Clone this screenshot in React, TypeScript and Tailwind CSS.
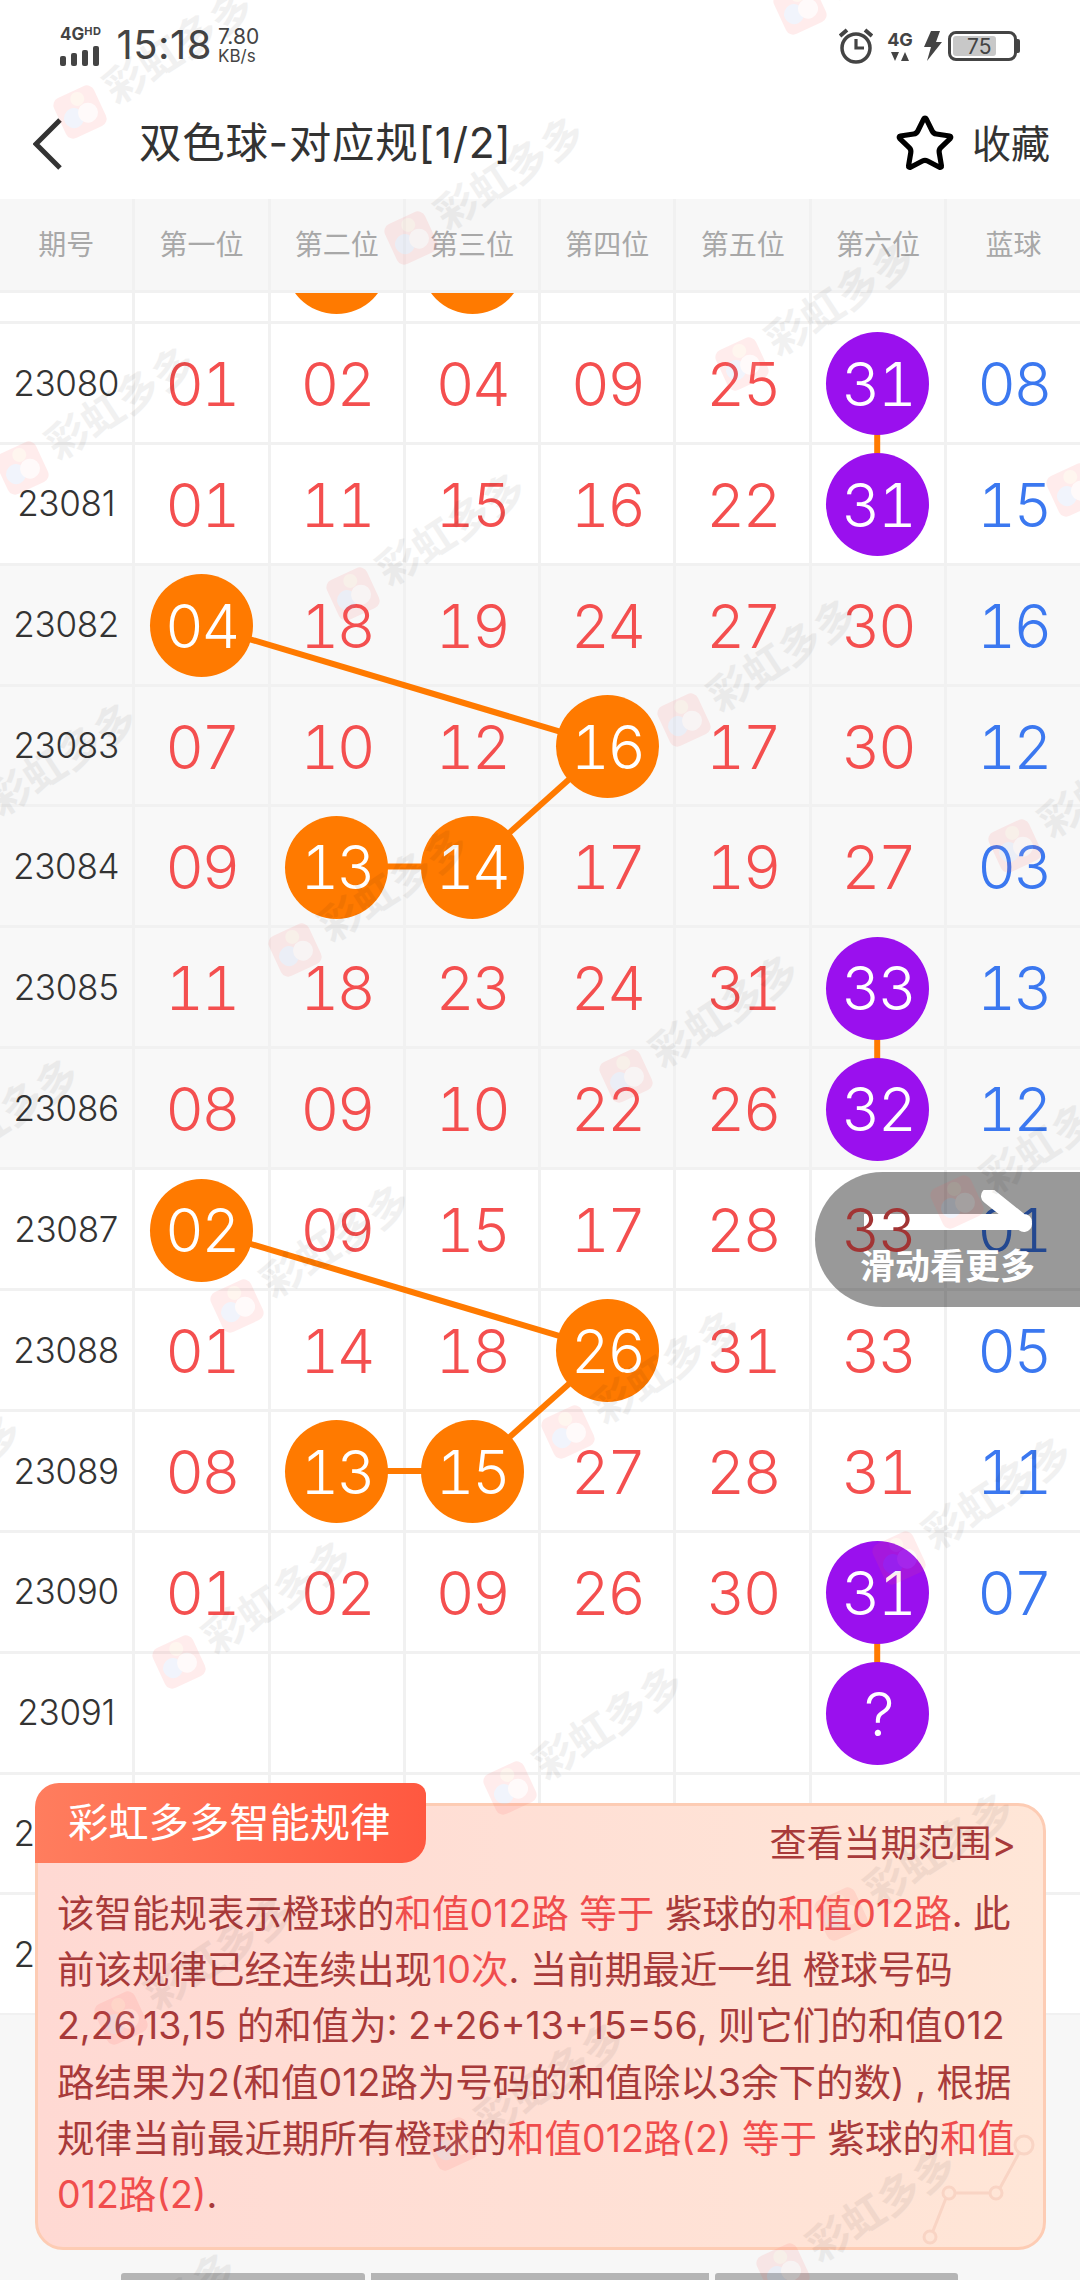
import { Star } from "lucide-react";

type Cell = string | { n: string; ball: "o" | "p" };

const o = (n: string): Cell => ({ n, ball: "o" });
const p = (n: string): Cell => ({ n, ball: "p" });

const rows: { id: string; cells: Cell[]; gray?: boolean }[] = [
  { id: "", cells: ["", o(""), o(""), "", "", "", ""] },
  { id: "23080", cells: ["01", "02", "04", "09", "25", p("31"), "08"] },
  { id: "23081", cells: ["01", "11", "15", "16", "22", p("31"), "15"] },
  { id: "23082", gray: true, cells: [o("04"), "18", "19", "24", "27", "30", "16"] },
  { id: "23083", gray: true, cells: ["07", "10", "12", o("16"), "17", "30", "12"] },
  { id: "23084", gray: true, cells: ["09", o("13"), o("14"), "17", "19", "27", "03"] },
  { id: "23085", gray: true, cells: ["11", "18", "23", "24", "31", p("33"), "13"] },
  { id: "23086", gray: true, cells: ["08", "09", "10", "22", "26", p("32"), "12"] },
  { id: "23087", cells: [o("02"), "09", "15", "17", "28", "33", "01"] },
  { id: "23088", cells: ["01", "14", "18", o("26"), "31", "33", "05"] },
  { id: "23089", cells: ["08", o("13"), o("15"), "27", "28", "31", "11"] },
  { id: "23090", cells: ["01", "02", "09", "26", "30", p("31"), "07"] },
  { id: "23091", cells: ["", "", "", "", "", p("?"), ""] },
  { id: "23092", cells: ["", "", "", "", "", "", ""] },
  { id: "23093", cells: ["", "", "", "", "", "", ""] },
];

// col, row index pairs joined by the orange line
const links: [number, number, number, number][] = [
  [2, 0, 3, 0],
  [6, 1, 6, 2],
  [1, 3, 4, 4],
  [4, 4, 3, 5],
  [3, 5, 2, 5],
  [6, 6, 6, 7],
  [1, 8, 4, 9],
  [4, 9, 3, 10],
  [3, 10, 2, 10],
  [6, 11, 6, 12],
];

const cx = (c: number) => 66 + c * 135.2;
const cy = (r: number) => -90 + r * 120.9 + 59;

const marks: { x: number; y: number }[] = [];
for (let i = -3; i < 6; i++) {
  for (let j = -1; j < 8; j++) {
    const x = 80 + 331 * i - 58 * j;
    const y = 112 + 126 * i + 356 * j;
    if (x > -220 && x < 1100 && y > -40 && y < 2400) marks.push({ x, y });
  }
}

const Watermark = ({ x, y }: { x: number; y: number }) => (
  <div className="absolute" style={{ left: x, top: y }}>
    <svg width="50" height="50" viewBox="0 0 50 50" className="absolute -left-[25px] -top-[25px] opacity-[0.11] -rotate-[25deg]">
      <rect x="3" y="3" width="44" height="44" rx="8" fill="#ff5a5a" />
      <circle cx="17" cy="28" r="10" fill="#8aa6e8" />
      <circle cx="32" cy="29" r="10" fill="#ffd9d9" />
      <circle cx="28" cy="12" r="7" fill="#ffb27a" />
    </svg>
    <span className="absolute left-[28px] -top-[44px] origin-left -rotate-[33deg] whitespace-nowrap text-[42px] leading-[50px] font-bold text-black opacity-[0.05]">
      彩虹多多
    </span>
  </div>
);

const TableCell = ({ cell, last, hot }: { cell: Cell; last?: boolean; hot?: boolean }) => {
  const color = last ? "text-[#3b78f0]" : "text-[#f44f4f]";
  return (
    <div className="flex items-center justify-center border-r-[3px] border-[#f1f1f1] pt-[2px] tracking-[-2.5px] tabular-nums last:border-r-0">
      {typeof cell === "string" ? (
        <span className={hot ? "relative z-30 text-[60px] font-light text-[#a23434]" : `text-[60px] font-light ${color}`}>{cell}</span>
      ) : (
        <span className={`relative z-10 flex h-[103px] w-[103px] items-center justify-center rounded-full text-[60px] font-light text-white ${cell.ball === "o" ? "bg-[#ff7a00]" : "bg-[#9a10ee]"}`}>
          {cell.n}
        </span>
      )}
    </div>
  );
};

const Red = ({ children }: { children: React.ReactNode }) => <span className="text-[#f04d4d]">{children}</span>;

export default function App() {
  return (
    <div className="relative h-[2280px] w-[1080px] overflow-hidden bg-[#f7f7f7] font-[Inter,'Noto_Sans_CJK_SC',sans-serif]">
      {/* status bar */}
      <div className="flex h-[92px] items-center justify-between bg-white pl-[60px] pr-[60px] text-[#444]">
        <div className="flex items-center">
          <div className="flex flex-col items-start">
            <div className="flex items-start font-bold leading-none">
              <span className="text-[17px]">4G</span>
              <span className="text-[11px] tracking-[0.5px]">HD</span>
            </div>
            <div className="mt-[3px] flex items-end gap-[5px]">
              <div className="h-[10px] w-[6px] rounded-[2px] bg-[#444]" />
              <div className="h-[13px] w-[6px] rounded-[2px] bg-[#444]" />
              <div className="h-[16px] w-[6px] rounded-[2px] bg-[#444]" />
              <div className="h-[20px] w-[6px] rounded-[2px] bg-[#444]" />
            </div>
          </div>
          <span className="ml-[15px] -mt-[2px] text-[40px] leading-none tracking-[0.5px]">15:18</span>
          <div className="ml-[6px] -mt-[2px] flex flex-col leading-none">
            <span className="text-[21px]">7.80</span>
            <span className="mt-[1px] text-[17px]">KB/s</span>
          </div>
        </div>
        <div className="flex items-center">
          <svg width="34" height="36" viewBox="0 0 34 36" fill="none" stroke="#444">
            <circle cx="17" cy="20" r="14" strokeWidth="3.5" />
            <path d="M17 11v9h8" strokeWidth="3.2" />
            <path d="M1 8 8 2M33 8l-7-6" strokeWidth="4" />
          </svg>
          <div className="ml-[15px] flex w-[24px] flex-col items-center">
            <span className="text-[18px] font-bold leading-none">4G</span>
            <svg width="20" height="9" viewBox="0 0 20 9" fill="#444" className="mt-[3px]">
              <path d="M1 0h8L5 9zM11 9h8l-4-9z" />
            </svg>
          </div>
          <svg width="18" height="30" viewBox="0 0 18 30" fill="#444" className="ml-[12px]">
            <path d="M7 0h9l-4 11h6L3 30l4-14H0z" />
          </svg>
          <div className="relative ml-[6px] flex h-[30px] w-[69px] items-center rounded-[8px] border-[3px] border-[#444] p-[2px]">
            <div className="h-full w-[43px] rounded-[3px] bg-[#c8c8c8]" />
            <span className="absolute left-[16px] text-[21px] leading-none">75</span>
          </div>
          <div className="h-[14px] w-[3px] rounded-r-[2px] bg-[#444]" />
        </div>
      </div>

      {/* nav */}
      <div className="flex h-[107px] items-center bg-white pb-[4px] pl-[33px] pr-[30px] text-[#333]">
        <svg width="30" height="52" viewBox="0 0 30 52" fill="none" stroke="#333" strokeWidth="5">
          <path d="M27 2 3 26l24 24" />
        </svg>
        <span className="ml-[76px] flex-1 text-[42.5px] leading-none tracking-[0.7px]">双色球-对应规[1/2]</span>
        <Star size={62} color="#000" strokeWidth={2} />
        <span className="ml-[16px] text-[39px] leading-none">收藏</span>
      </div>

      {/* table head */}
      <div className="relative z-20 grid h-[94px] grid-cols-[repeat(7,135.3px)_1fr] border-b-[3px] border-[#f1f1f1] bg-[#f7f7f7] text-[28px] text-[#a8a8a8]">
        {["期号", "第一位", "第二位", "第三位", "第四位", "第五位", "第六位", "蓝球"].map((t) => (
          <div key={t} className="flex items-center justify-center border-r-[3px] border-[#f1f1f1] last:border-r-0">
            {t}
          </div>
        ))}
      </div>

      {/* table body */}
      <div className="relative h-[1722px] overflow-hidden bg-white">
        <div className="-mt-[90px]">
          {rows.map((r, i) => (
            <div key={i} className={`grid h-[120.9px] grid-cols-[repeat(7,135.3px)_1fr] border-b-[3px] border-[#f1f1f1] ${r.gray ? "bg-[#f8f8f8]" : ""}`}>
              <div className="flex items-center justify-center border-r-[3px] border-[#f1f1f1] text-[35px] font-light tracking-[-0.3px] text-[#333]">{r.id}</div>
              {r.cells.map((c, k) => (
                <TableCell key={k} cell={c} last={k === 6} hot={r.id === "23087" && k === 5} />
              ))}
            </div>
          ))}
        </div>
        <svg className="absolute inset-0 h-full w-full" fill="none" stroke="#ff7a00" strokeWidth="6">
          {links.map(([c1, r1, c2, r2], i) => (
            <line key={i} x1={cx(c1)} y1={cy(r1)} x2={cx(c2)} y2={cy(r2)} />
          ))}
        </svg>
      </div>

      {/* slide hint */}
      <div className="absolute left-[815px] top-[1172px] z-20 flex h-[135px] w-[265px] flex-col items-center rounded-l-[68px] bg-black/40">
        <svg width="170" height="50" viewBox="0 0 170 50" fill="none" stroke="#fff" strokeWidth="16" strokeLinecap="round" className="ml-[2px] mt-[18px]">
          <path d="M0 32h160M125 6l35 28" />
        </svg>
        <span className="mt-[9px] text-[35px] font-bold leading-none text-white">滑动看更多</span>
      </div>

      {/* rule card */}
      <div className="absolute left-[35px] top-[1803px] z-20 h-[447px] w-[1011px] rounded-[28px] border-[3px] border-[#fdccb4] bg-linear-to-r from-[#ffd9d3] to-[#ffe6d7]">
        <svg width="120" height="120" viewBox="0 0 120 120" fill="none" stroke="#f9d4c4" strokeWidth="3" className="absolute bottom-[2px] right-[2px]">
          <circle cx="103" cy="20" r="9" />
          <circle cx="75" cy="68" r="6" />
          <circle cx="28" cy="68" r="6" />
          <circle cx="9" cy="112" r="6" />
          <path d="m98 28-19 35M69 68H34M25 73l-13 33" />
        </svg>
        <div className="absolute -left-[3px] -top-[23px] flex h-[80px] w-[391px] items-center rounded-tl-[24px] rounded-tr-[12px] rounded-br-[24px] bg-linear-to-r from-[#ff7d5e] to-[#ff5840] pl-[33px] text-[40.3px] leading-none text-white">
          彩虹多多智能规律
        </div>
        <div className="flex justify-end pr-[27px] pt-[16px] text-[37px] leading-[44px] text-[#a83a3a]">查看当期范围&gt;</div>
        <div className="ml-[19px] mt-[20px] whitespace-nowrap text-[37.5px] leading-[56.2px] text-[#a83a3a]">
          <div>
            该智能规表示橙球的<Red>和值012路 等于</Red> 紫球的<Red>和值012路</Red>. 此
          </div>
          <div>
            前该规律已经连续出现<Red>10次</Red>. 当前期最近一组 橙球号码
          </div>
          <div>2,26,13,15 的和值为: 2+26+13+15=56, 则它们的和值012</div>
          <div>路结果为2(和值012路为号码的和值除以3余下的数) , 根据</div>
          <div>
            规律当前最近期所有橙球的<Red>和值012路(2) 等于</Red> 紫球的<Red>和值</Red>
          </div>
          <div>
            <Red>012路(2)</Red>.
          </div>
        </div>
      </div>

      {/* bottom tabs peeking */}
      <div className="absolute bottom-0 left-[121px] flex h-[7px] gap-[6px]">
        <div className="w-[244px] rounded-t-[3px] bg-[#b5b5b5]" />
        <div className="w-[338px] bg-[#b5b5b5]" />
        <div className="w-[243px] rounded-t-[3px] bg-[#b5b5b5]" />
      </div>

      {/* watermark */}
      <div className="pointer-events-none absolute inset-0 z-40">
        {marks.map((m, i) => (
          <Watermark key={i} x={m.x} y={m.y} />
        ))}
      </div>
    </div>
  );
}
